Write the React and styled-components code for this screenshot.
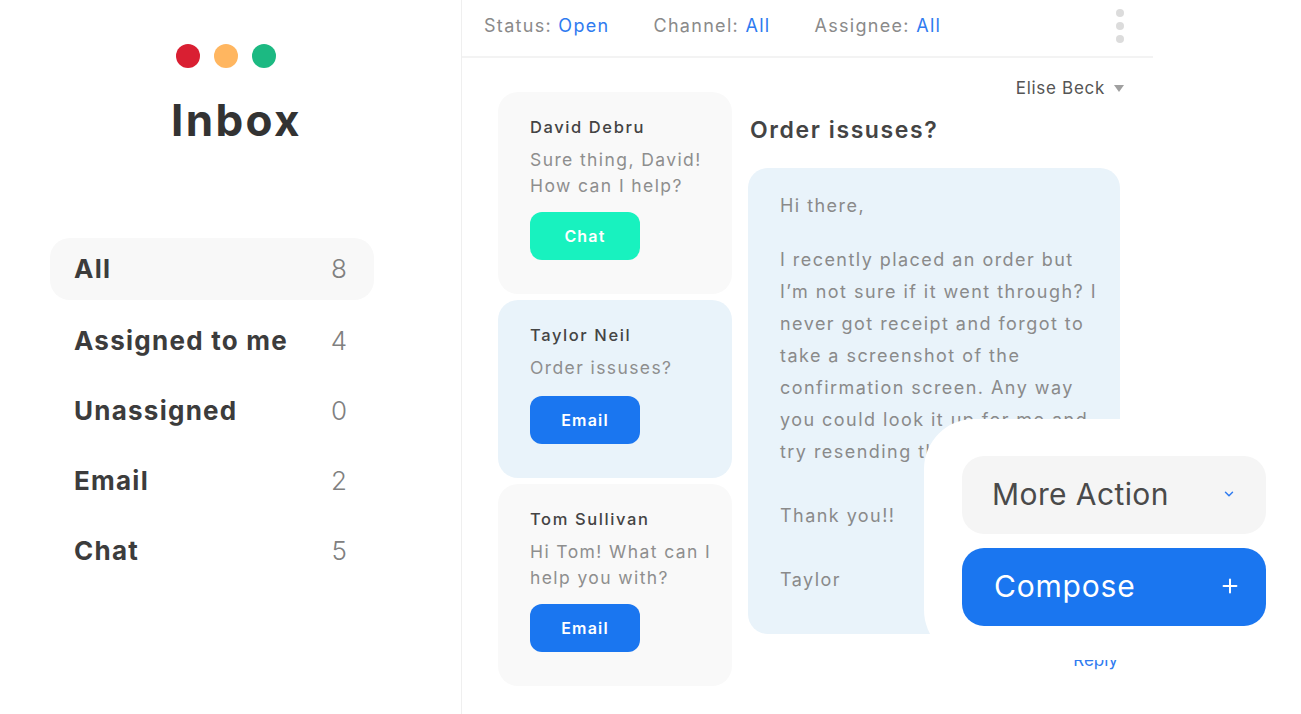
import styled, { createGlobalStyle } from "styled-components";
import { ChevronDown, Plus } from "lucide-react";

const GlobalStyle = createGlobalStyle`
  html, body {
    margin: 0;
    padding: 0;
    background: #fff;
    overflow: hidden;
  }
  * {
    box-sizing: border-box;
  }
`;

const Page = styled.div`
  position: relative;
  display: flex;
  width: 1301px;
  height: 714px;
  overflow: hidden;
  font-family: Inter, "Noto Sans", sans-serif;
  color: #3a3a3a;
`;

const Sidebar = styled.aside`
  width: 462px;
  height: 100%;
  padding: 44px 87px 0 50px;
  border-right: 1px solid #efefef;
`;

const Dots = styled.div`
  display: flex;
  justify-content: center;
  gap: 14px;
  padding-left: 28px;
`;

const Dot = styled.span`
  width: 24px;
  height: 24px;
  border-radius: 50%;
  background: ${(props) => props.$color};
`;

const Title = styled.h1`
  margin: 26px 0 0;
  padding-left: 49px;
  font-size: 44px;
  line-height: 52px;
  font-weight: 700;
  letter-spacing: 2.4px;
  text-align: center;
  color: #333;
`;

const Nav = styled.nav`
  display: flex;
  flex-direction: column;
  gap: 8px;
  margin-top: 92px;
`;

const NavRow = styled.div`
  display: flex;
  align-items: center;
  justify-content: space-between;
  height: 62px;
  padding: 0 27px 2px 24px;
  margin-bottom: ${(props) => (props.$active ? "2px" : "0")};
  border-radius: 20px;
  background: ${(props) => (props.$active ? "#f8f8f8" : "transparent")};
`;

const NavLabel = styled.span`
  font-size: 26px;
  font-weight: 700;
  letter-spacing: 1.25px;
  color: #3c3c3c;
`;

const NavCount = styled.span`
  font-size: 26px;
  font-weight: 300;
  color: #808080;
`;

const Main = styled.main`
  width: 691px;
  height: 100%;
`;

const TopBar = styled.header`
  display: flex;
  align-items: center;
  height: 58px;
  padding: 0 29px 6px 22px;
  border-bottom: 2px solid #f3f3f3;
`;

const Filter = styled.span`
  margin-right: 44px;
  font-size: 18px;
  font-weight: 400;
  letter-spacing: 1.3px;
  color: #8a8a8a;

  b {
    font-weight: 400;
    color: #2f7bf0;
  }
`;

const Kebab = styled.div`
  display: flex;
  flex-direction: column;
  gap: 5px;
  margin-left: auto;
  padding-top: 2px;

  span {
    width: 8px;
    height: 8px;
    border-radius: 50%;
    background: #dcdcdc;
  }
`;

const Content = styled.div`
  display: flex;
  gap: 16px;
  padding: 20px 29px 0 36px;
`;

const CardList = styled.div`
  display: flex;
  flex-direction: column;
  gap: 6px;
  width: 234px;
  padding-top: 14px;
`;

const Card = styled.article`
  height: ${(props) => props.$height}px;
  padding: 23px 0 0 32px;
  border-radius: 20px;
  background: ${(props) => (props.$active ? "#e9f3fa" : "#f9f9f9")};
`;

const CardName = styled.div`
  font-size: 16.5px;
  line-height: 24px;
  font-weight: 500;
  letter-spacing: 1.6px;
  color: #444;
`;

const CardText = styled.div`
  margin-top: 8px;
  font-size: 17.5px;
  line-height: 26px;
  font-weight: 400;
  letter-spacing: 1.4px;
  white-space: nowrap;
  color: #8e8e8e;
`;

const Tag = styled.button`
  display: block;
  width: 110px;
  height: 48px;
  margin-top: ${(props) => props.$gap}px;
  border: 0;
  border-radius: 12px;
  background: ${(props) => props.$color};
  color: #fff;
  font-family: inherit;
  font-size: 16px;
  font-weight: 600;
  letter-spacing: 1.2px;
`;

const Detail = styled.section`
  flex: 1;
  min-width: 0;
`;

const Owner = styled.div`
  display: flex;
  align-items: center;
  justify-content: flex-end;
  gap: 9px;
  height: 20px;
  font-size: 17px;
  letter-spacing: 0.7px;
  color: #555;
`;

const Caret = styled.span`
  width: 0;
  height: 0;
  border-left: 5px solid transparent;
  border-right: 5px solid transparent;
  border-top: 7px solid #a0a0a0;
`;

const Subject = styled.h2`
  margin: 15px 0 0 2px;
  font-size: 23px;
  line-height: 34px;
  font-weight: 600;
  letter-spacing: 1.6px;
  color: #444;
`;

const Message = styled.div`
  width: 372px;
  height: 466px;
  margin-top: 21px;
  padding: 22px 0 0 32px;
  border-radius: 20px;
  background: #e9f3fa;
  font-size: 18px;
  line-height: 32px;
  letter-spacing: 1.45px;
  white-space: nowrap;
  color: #8a8a8a;
`;

const Paragraph = styled.div`
  margin-bottom: ${(props) => props.$after}px;
`;

const Reply = styled.div`
  width: 370px;
  margin-top: 16px;
  text-align: right;
  font-size: 17px;
  color: #2f7bf0;
`;

const ActionPanel = styled.div`
  position: absolute;
  left: 924px;
  top: 419px;
  width: 377px;
  height: 241px;
  padding: 37px 35px 0 38px;
  border-radius: 50px 0 0 50px;
  background: #fff;
`;

const ActionButton = styled.button`
  display: flex;
  align-items: center;
  justify-content: space-between;
  width: 304px;
  height: 78px;
  margin-bottom: 14px;
  padding: ${(props) => (props.$primary ? "0 25px 2px 32px" : "0 30px 2px")};
  border: 0;
  border-radius: 22px;
  background: ${(props) => (props.$primary ? "#1a76f0" : "#f5f5f5")};
  color: ${(props) => (props.$primary ? "#fff" : "#4a4a4a")};
  font-family: inherit;
  font-size: 30px;
  font-weight: 400;
  letter-spacing: ${(props) => (props.$primary ? "0.8px" : "0.4px")};
`;

const filters = [
  ["Status:", "Open"],
  ["Channel:", "All"],
  ["Assignee:", "All"],
];

const navItems = [
  { label: "All", count: 8, active: true },
  { label: "Assigned to me", count: 4 },
  { label: "Unassigned", count: 0 },
  { label: "Email", count: 2 },
  { label: "Chat", count: 5 },
];

const cards = [
  { name: "David Debru", text: ["Sure thing, David!", "How can I help?"], tag: "Chat", color: "#18f2bf", height: 202, gap: 13 },
  { name: "Taylor Neil", text: ["Order issuses?"], tag: "Email", color: "#1a76f0", height: 178, gap: 15, active: true },
  { name: "Tom Sullivan", text: ["Hi Tom! What can I", "help you with?"], tag: "Email", color: "#1a76f0", height: 202, gap: 13 },
];

const messageBody = [
  "I recently placed an order but",
  "I’m not sure if it went through? I",
  "never got receipt and forgot to",
  "take a screenshot of the",
  "confirmation screen. Any way",
  "you could look it up for me and",
  "try resending that?",
];

const App = () => {
  return (
    <Page>
      <GlobalStyle />
      <Sidebar>
        <Dots>
          <Dot $color="#d91f32" />
          <Dot $color="#ffb660" />
          <Dot $color="#1cb982" />
        </Dots>
        <Title>Inbox</Title>
        <Nav>
          {navItems.map((item) => (
            <NavRow key={item.label} $active={item.active}>
              <NavLabel>{item.label}</NavLabel>
              <NavCount>{item.count}</NavCount>
            </NavRow>
          ))}
        </Nav>
      </Sidebar>
      <Main>
        <TopBar>
          {filters.map(([label, value]) => (
            <Filter key={label}>
              {label} <b>{value}</b>
            </Filter>
          ))}
          <Kebab>
            <span />
            <span />
            <span />
          </Kebab>
        </TopBar>
        <Content>
          <CardList>
            {cards.map((card) => (
              <Card key={card.name} $active={card.active} $height={card.height}>
                <CardName>{card.name}</CardName>
                <CardText>
                  {card.text.map((line) => (
                    <div key={line}>{line}</div>
                  ))}
                </CardText>
                <Tag $color={card.color} $gap={card.gap}>
                  {card.tag}
                </Tag>
              </Card>
            ))}
          </CardList>
          <Detail>
            <Owner>
              Elise Beck <Caret />
            </Owner>
            <Subject>Order issuses?</Subject>
            <Message>
              <Paragraph $after={22}>Hi there,</Paragraph>
              <Paragraph $after={32}>
                {messageBody.map((line) => (
                  <div key={line}>{line}</div>
                ))}
              </Paragraph>
              <Paragraph $after={32}>Thank you!!</Paragraph>
              <Paragraph $after={0}>Taylor</Paragraph>
            </Message>
            <Reply>Reply</Reply>
          </Detail>
        </Content>
      </Main>
      <ActionPanel>
        <ActionButton>
          More Action
          <ChevronDown size={14} color="#2f7bf0" strokeWidth={2.5} />
        </ActionButton>
        <ActionButton $primary>
          Compose
          <Plus size={22} color="#fff" strokeWidth={2.2} />
        </ActionButton>
      </ActionPanel>
    </Page>
  );
};

export default App;
